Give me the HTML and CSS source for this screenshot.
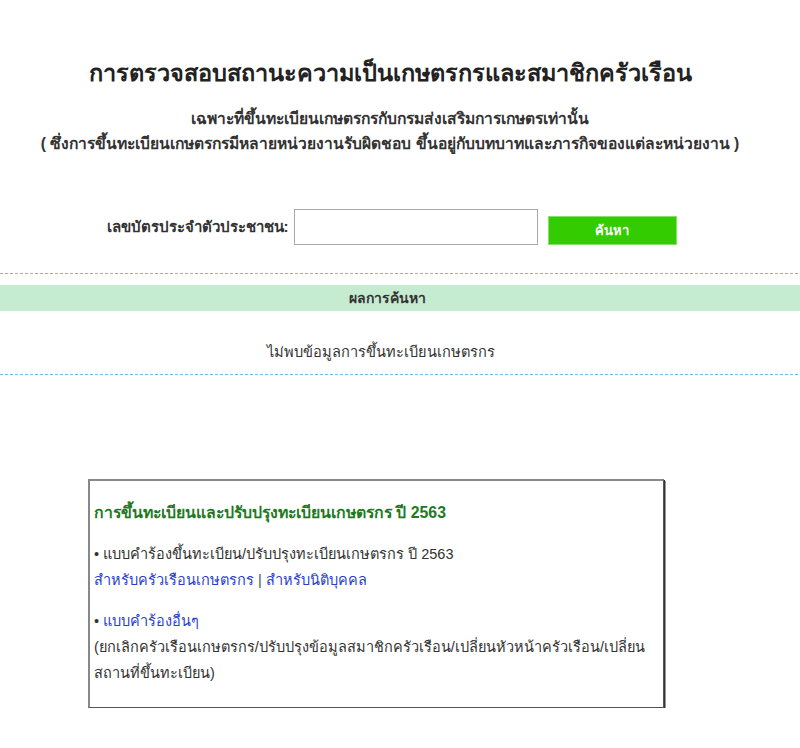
FILE: index.html
```html
<!DOCTYPE html>
<html lang="th">
<head>
    <meta charset="UTF-8">
    <meta name="viewport" content="width=device-width, initial-scale=1.0">
    <title>ตรวจสอบสถานะเกษตรกร</title>
    <link rel="stylesheet" href="styles.css">
</head>
<body>
    <div class="page">
        <h1 class="title">การตรวจสอบสถานะความเป็นเกษตรกรและสมาชิกครัวเรือน</h1>
        <p class="note">เฉพาะที่ขึ้นทะเบียนเกษตรกรกับกรมส่งเสริมการเกษตรเท่านั้น</p>
        <p class="note">( ซึ่งการขึ้นทะเบียนเกษตรกรมีหลายหน่วยงานรับผิดชอบ ขึ้นอยู่กับบทบาทและภารกิจของแต่ละหน่วยงาน )</p>

        <form class="search-row" onsubmit="return false">
            <label for="pid" class="search-label">เลขบัตรประจำตัวประชาชน:</label>
            <input type="text" id="pid" class="search-input">
            <button type="submit" class="search-btn">ค้นหา</button>
        </form>
    </div>

    <div class="dotted"></div>
    <div class="result-head">ผลการค้นหา</div>
    <div class="result-body">ไม่พบข้อมูลการขึ้นทะเบียนเกษตรกร</div>
    <div class="dotted"></div>

    <div class="info-box">
        <div class="info-title">การขึ้นทะเบียนและปรับปรุงทะเบียนเกษตรกร ปี 2563</div>
        <div class="info-item">
            • แบบคำร้องขึ้นทะเบียน/ปรับปรุงทะเบียนเกษตรกร ปี 2563<br>
            <a href="#">สำหรับครัวเรือนเกษตรกร</a> <span class="sep">|</span> <a href="#">สำหรับนิติบุคคล</a>
        </div>
        <div class="info-item">
            • <a href="#">แบบคำร้องอื่นๆ</a><br>
            (ยกเลิกครัวเรือนเกษตรกร/ปรับปรุงข้อมูลสมาชิกครัวเรือน/เปลี่ยนหัวหน้าครัวเรือน/เปลี่ยน<br>
            สถานที่ขึ้นทะเบียน)
        </div>
    </div>
</body>
</html>
```

FILE: styles.css
```css
body {
    font-family: "Liberation Sans", "Noto Sans", sans-serif;
    margin: 0;
    padding: 0;
    color: #333;
    background: #fff;
}
.page {
    width: 780px;
    text-align: center;
}
.title {
    font-size: 23.5px;
    font-weight: bold;
    color: #222;
    margin: 0;
    padding-top: 58px;
    line-height: 30px;
}
.note {
    font-size: 15.6px;
    font-weight: bold;
    margin: 0;
    line-height: 25px;
}
.title + .note {
    margin-top: 18px;
}
.search-row {
    display: flex;
    align-items: center;
    justify-content: center;
    height: 36px;
    margin-top: 53px;
    padding-left: 3px;
}
.search-label {
    font-size: 15px;
    line-height: 20px;
    font-weight: bold;
    margin-right: 5px;
}
.search-input {
    width: 244px;
    height: 36px;
    box-sizing: border-box;
    border: 1px solid #aaa;
    outline: none;
}
.search-btn {
    margin-left: 10px;
    margin-top: 7px;
    width: 129px;
    height: 29px;
    background-color: #33cc00;
    border: 1px solid #88e066;
    color: #fff;
    font-family: inherit;
    font-weight: bold;
    font-size: 13px;
}
.dotted {
    height: 1px;
    background-image: repeating-linear-gradient(90deg, #6bbbee 0 3px, transparent 3px 5px);
    margin-top: 28px;
}
.result-head {
    margin-top: 11px;
    height: 26px;
    line-height: 26px;
    background-color: #c5ebd1;
    text-align: center;
    font-size: 14px;
    font-weight: bold;
    padding-right: 26px;
}
.result-body {
    text-align: center;
    font-size: 14.6px;
    padding: 28px 38px 0 0;
    line-height: 26px;
}
.result-body + .dotted {
    margin-top: 9px;
}
.info-box {
    width: 565px;
    margin: 104px 0 0 88px;
    border: 1px solid #555;
    border-top: 2px solid #888;
    border-left: 2px solid #888;
    box-shadow: 1px 1px 0 #333, 2px 2px 0 #999;
    padding: 19px 4px 21px;
    font-size: 14.5px;
    line-height: 26px;
    color: #333;
}
.info-title {
    color: #1f7a1f;
    font-weight: bold;
    font-size: 15.8px;
    margin-bottom: 15px;
}
.info-item {
    margin-bottom: 15px;
}
.info-item:last-child {
    margin-bottom: 0;
}
.info-box a {
    color: #2a3fd0;
    text-decoration: none;
}
.sep {
    color: #555;
}
```
